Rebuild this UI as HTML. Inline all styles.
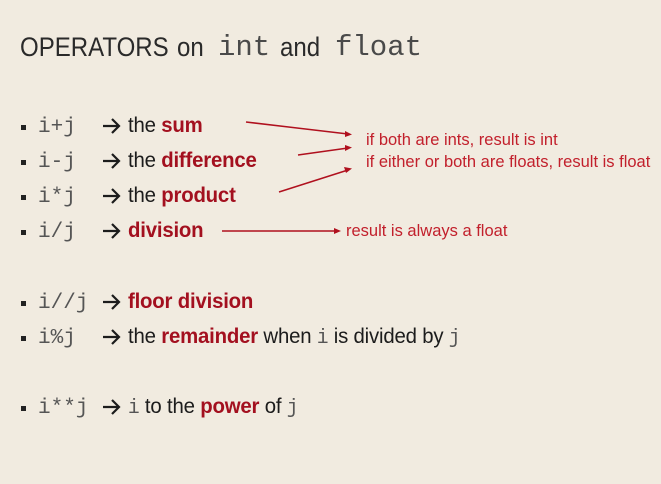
<!DOCTYPE html>
<html><head><meta charset="utf-8"><style>
html,body{margin:0;padding:0}
body{width:661px;height:484px;background:#f1ebe0;position:relative;overflow:hidden;font-family:"Liberation Sans",sans-serif;color:#1c1c1c}
.a{position:absolute;white-space:nowrap;transform-origin:0 0}
.m{font-family:"Liberation Mono",monospace;color:#555;font-size:21px}
.r{color:#a3101f;font-weight:bold}
.b{position:absolute;width:5px;height:5px;background:#222}
.t{font-size:21px;transform:scaleX(0.97);letter-spacing:-0.2px}
.t .m{font-size:20px}
.n{font-size:16.5px;color:#c2202c}
.h{font-size:27px;color:#2a2a2a;transform:scaleX(0.89);top:32px}
.hm{font-family:"Liberation Mono",monospace;font-size:29px;color:#4a4a4a;top:31px}
</style></head><body>
<div class="a h" style="left:20px">OPERATORS</div>
<div class="a h" style="left:177px">on</div>
<div class="a hm" style="left:218px">int</div>
<div class="a h" style="left:280px">and</div>
<div class="a hm" style="left:335px">float</div>

<div class="b" style="left:21px;top:125px"></div>
<div class="a m" style="left:38px;top:116px">i+j</div>
<div class="a t" style="left:128px;top:114px">the <span class="r">sum</span></div>

<div class="b" style="left:21px;top:160px"></div>
<div class="a m" style="left:38px;top:151px">i-j</div>
<div class="a t" style="left:128px;top:149px">the <span class="r">difference</span></div>

<div class="b" style="left:21px;top:195px"></div>
<div class="a m" style="left:38px;top:186px">i*j</div>
<div class="a t" style="left:128px;top:184px">the <span class="r">product</span></div>

<div class="b" style="left:21px;top:230px"></div>
<div class="a m" style="left:38px;top:221px">i/j</div>
<div class="a t" style="left:128px;top:219px"><span class="r">division</span></div>

<div class="b" style="left:21px;top:301px"></div>
<div class="a m" style="left:38px;top:292px">i//j</div>
<div class="a t" style="left:128px;top:290px"><span class="r">floor division</span></div>

<div class="b" style="left:21px;top:336px"></div>
<div class="a m" style="left:38px;top:327px">i%j</div>
<div class="a t" style="left:128px;top:325px">the <span class="r">remainder</span> when <span class="m">i</span> is divided by <span class="m">j</span></div>

<div class="b" style="left:21px;top:406px"></div>
<div class="a m" style="left:38px;top:397px">i**j</div>
<div class="a t" style="left:128px;top:395px"><span class="m">i</span> to the <span class="r">power</span> of <span class="m">j</span></div>

<div class="a n" style="left:366px;top:131px">if both are ints, result is int</div>
<div class="a n" style="left:366px;top:153px">if either or both are floats, result is float</div>
<div class="a n" style="left:346px;top:222px">result is always a float</div>

<svg class="a" style="left:0;top:0" width="661" height="484">
<g stroke="#1c1c1c" stroke-width="2.2" fill="none">
<path d="M103 126H119M112 119L119 126L112 133"/>
<path d="M103 161H119M112 154L119 161L112 168"/>
<path d="M103 196H119M112 189L119 196L112 203"/>
<path d="M103 231H119M112 224L119 231L112 238"/>
<path d="M103 302H119M112 295L119 302L112 309"/>
<path d="M103 337H119M112 330L119 337L112 344"/>
<path d="M103 407H119M112 400L119 407L112 414"/>
</g>
<g stroke="#b0101e" stroke-width="1.5" fill="#b0101e">
<line x1="246" y1="122" x2="348" y2="134"/><polygon points="352,134.5 345,131 345,137" stroke="none"/>
<line x1="298" y1="155" x2="348" y2="148"/><polygon points="352,147.5 345,145 345,151" stroke="none"/>
<line x1="279" y1="192" x2="348" y2="170"/><polygon points="352,168.5 344,167 346,173" stroke="none"/>
<line x1="222" y1="231" x2="336" y2="231"/><polygon points="341,231 334,228 334,234" stroke="none"/>
</g></svg>
</body></html>
